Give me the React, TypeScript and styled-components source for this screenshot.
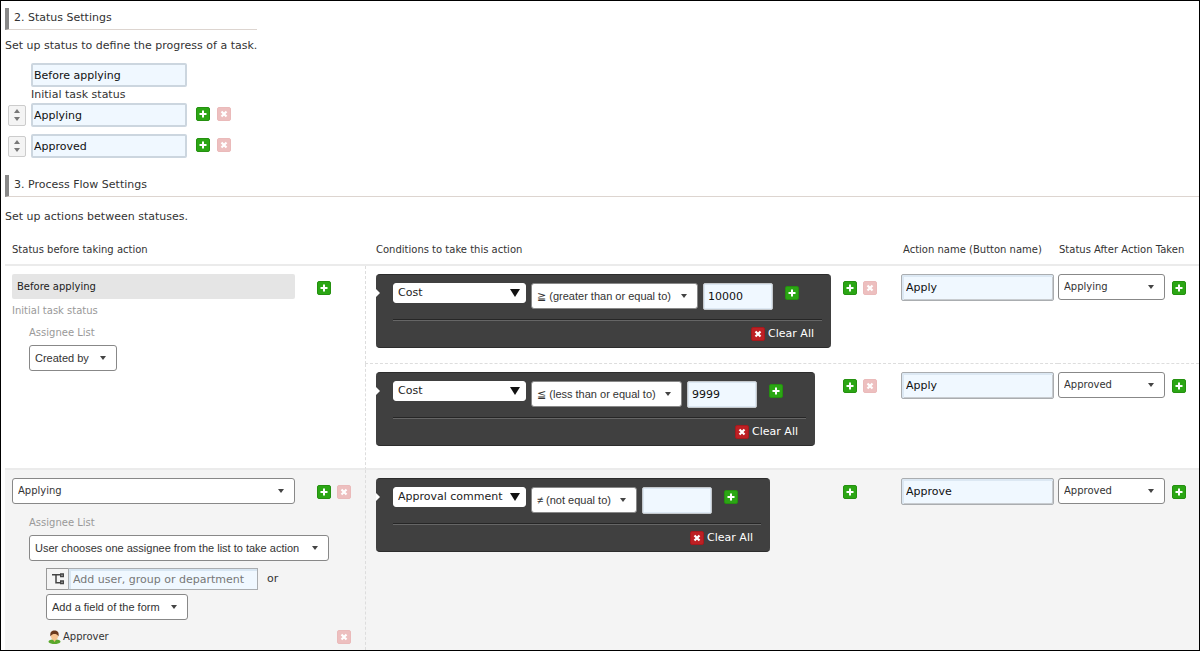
import React from "react";
import styled, { createGlobalStyle, css } from "styled-components";

const verdana = `Verdana, "DejaVu Sans", sans-serif`;
const arial = `Arial, "Liberation Sans", "DejaVu Sans", sans-serif`;

const GlobalStyle = createGlobalStyle`
  *, *::before, *::after { box-sizing: border-box; }
  body { margin: 0; background: #fff; color: #333; font: 11px/16px ${verdana}; }
  h2, p { margin: 0; font-weight: 400; }
  button, input, select { font: inherit; color: inherit; margin: 0; }
`;

const Page = styled.main`
  min-height: 100vh;
  padding: 7px 0 0 4px;
  border: 1px solid #000;
`;

const StatusSection = styled.section`
  width: fit-content;
  margin-bottom: 17px;
`;

const SectionTitle = styled.h2`
  padding: 2px 0 3px 5px;
  border-left: 4px solid #888;
  border-bottom: 1px solid #ddd5d0;
  font-size: 11px;
  line-height: 16px;
`;

const Lead = styled.p<{ $top: number }>`
  padding: ${(p) => p.$top}px 0 9px;
`;

const StatusList = styled.ul`
  margin: 0;
  padding: 0 0 0 3px;
  list-style: none;
`;

const StatusItem = styled.li`
  display: flex;
  gap: 5px;
  align-items: center;
  margin-bottom: 7px;
`;

const InitialItem = styled.li`
  width: 156px;
  margin-left: 23px;
`;

const InitialNote = styled.div`
  line-height: 16px;
`;

const TextInput = styled.input<{ $w: number; $h: number }>`
  flex: none;
  width: ${(p) => p.$w}px;
  height: ${(p) => p.$h}px;
  padding: 0 4px;
  border: 1px solid #c4c8cc;
  border-radius: 2px;
  outline: 0;
  background: #f0f8ff;
  box-shadow: inset 0 0 0 1px #dbe7f2;
  color: #111;
`;

const StatusInput = styled(TextInput)`
  padding: 0 1px;
  border: 2px solid #ccd6df;
  box-shadow: none;
`;

const ActionInput = styled(TextInput)`
  border-color: #aaadb0;
  box-shadow: inset 1px 1px 0 1px #dce8f3, inset -1px -1px 0 0 #c8ccd0;
`;

const SortHandle = styled.button`
  display: flex;
  flex: none;
  flex-direction: column;
  align-items: center;
  justify-content: center;
  gap: 4px;
  width: 18px;
  height: 21px;
  padding: 0;
  border: 1px solid #ccc;
  border-radius: 2px;
  background: #f4f4f4;
`;

const Triangle = styled.span<{ $up?: boolean; $size: number }>`
  border: ${(p) => p.$size}px solid transparent;
  ${(p) =>
    p.$up
      ? css`border-top: 0; border-bottom: ${p.$size + 1}px solid #777;`
      : css`border-bottom: 0; border-top: ${p.$size + 1}px solid #777;`}
`;

const IconButton = styled.button`
  display: block;
  flex: none;
  width: 14px;
  height: 14px;
  padding: 0;
  border: 0;
  background: none;
  svg { display: block; }
`;

function AddIcon() {
  return (
    <svg width="14" height="14" viewBox="0 0 14 14" aria-hidden="true">
      <rect x="0.5" y="0.5" width="13" height="13" rx="1.5" fill="#2ba614" stroke="#259010" />
      <path d="M7 3.5v7M3.5 7h7" stroke="#fff" strokeWidth="2" />
    </svg>
  );
}

function RemoveIcon({ faded }: { faded?: boolean }) {
  return (
    <svg width="14" height="14" viewBox="0 0 14 14" aria-hidden="true">
      <rect x="0.5" y="0.5" width="13" height="13" rx="1.5" fill={faded ? "#edbfbf" : "#bd2024"} stroke={faded ? "#eababa" : "#a5191d"} />
      <path d="M4.5 4.5l5 5M9.5 4.5l-5 5" stroke="#fff" strokeWidth="2.2" />
    </svg>
  );
}

const AddButton = ({ label }: { label: string }) => (
  <IconButton type="button" aria-label={label}><AddIcon /></IconButton>
);
const RemoveButton = ({ label }: { label: string }) => (
  <IconButton type="button" aria-label={label}><RemoveIcon faded /></IconButton>
);

const Tools = styled.div<{ $w?: number }>`
  display: flex;
  flex: none;
  gap: 6px;
  width: ${(p) => (p.$w ? `${p.$w}px` : "auto")};
  padding-top: 7px;
`;

const ListTools = styled(Tools)`
  gap: 7px;
  padding: 0 0 2px 4px;
`;

const SelectBox = styled.span<{ $w: number }>`
  display: inline-grid;
  align-items: center;
  flex: none;
  width: ${(p) => p.$w}px;
  > * { grid-area: 1 / 1; }
  > span { justify-self: end; margin-right: 11px; pointer-events: none; border-top-color: #444; }
`;

const SelectControl = styled.select`
  appearance: none;
  width: 100%;
  height: 26px;
  padding: 0 20px 0 5px;
  border: 1px solid #888;
  border-radius: 3px;
  background: #fff;
  color: #333;
  font-family: ${arial};
  font-size: 11px;
`;

const StatusControl = styled(SelectControl)`
  font-family: ${verdana};
  font-size: 10px;
`;

const FieldBox = styled(SelectBox)`
  > span { margin-right: 6px; border-top-width: 8px; border-top-color: #111; }
`;

const FieldControl = styled(SelectControl)`
  height: 20px;
  padding-left: 4px;
  border-color: #fff;
  color: #222;
  font-family: ${verdana};
`;

function Select({ w, label, value }: { w: number; label: string; value: string }) {
  return (
    <SelectBox $w={w}>
      <SelectControl aria-label={label} defaultValue={value}><option>{value}</option></SelectControl>
      <Triangle $size={3} />
    </SelectBox>
  );
}

function StatusSelect({ w, label, value }: { w: number; label: string; value: string }) {
  return (
    <SelectBox $w={w}>
      <StatusControl aria-label={label} defaultValue={value}><option>{value}</option></StatusControl>
      <Triangle $size={3} />
    </SelectBox>
  );
}

const FlowTable = styled.table`
  width: 100%;
  table-layout: fixed;
  border-collapse: separate;
  border-spacing: 0;
`;

const Column = styled.col<{ $w?: number }>`
  width: ${(p) => (p.$w ? `${p.$w}px` : "auto")};
`;

const HeadCell = styled.th<{ $indent: number }>`
  height: 32px;
  padding: 2px 0 0 ${(p) => p.$indent}px;
  border-bottom: 2px solid #ebebeb;
  font-size: 10px;
  font-weight: 400;
  text-align: left;
  white-space: nowrap;
`;

const FlowRow = styled.tr<{ $shaded?: boolean; $h: number }>`
  height: ${(p) => p.$h}px;
  background: ${(p) => (p.$shaded ? "#f4f4f4" : "#fff")};
`;

const Cell = styled.td<{ $line?: "dashed" | "solid" }>`
  padding: 8px 0 0;
  vertical-align: top;
  ${(p) => p.$line && css`border-bottom: ${p.$line === "solid" ? "2px solid #ebebeb" : "1px dashed #ddd"};`}
`;

const StatusCell = styled(Cell)`
  padding-left: 7px;
`;

const ConditionCell = styled(Cell)`
  padding: 8px 24px 0 10px;
  border-left: 1px dashed #ddd;
`;

const Line = styled.div<{ $gap: number }>`
  display: flex;
  align-items: flex-start;
  gap: ${(p) => p.$gap}px;
`;

const SpreadLine = styled.div`
  display: flex;
  justify-content: space-between;
  align-items: flex-start;
`;

const FixedStatus = styled.div`
  width: 283px;
  height: 25px;
  padding: 0 5px;
  border-radius: 2px;
  background: #e5e5e5;
  color: #222;
  font-size: 10px;
  line-height: 25px;
`;

const Muted = styled.div`
  padding-top: 4px;
  color: #999;
  font-size: 10px;
  line-height: 16px;
`;

const Assignee = styled.div<{ $top: number }>`
  padding: ${(p) => p.$top}px 0 0 17px;
`;

const AssigneeTitle = styled.div`
  padding-bottom: 4px;
  color: #999;
  font-size: 10px;
  line-height: 16px;
`;

const Members = styled.div`
  display: flex;
  flex-direction: column;
  gap: 4px;
  padding: 7px 0 0 17px;
`;

const PickerLine = styled.div`
  display: flex;
  align-items: center;
  gap: 9px;
`;

const Picker = styled.div`
  display: flex;
`;

const PickerButton = styled.button`
  display: flex;
  align-items: center;
  justify-content: center;
  flex: none;
  width: 22px;
  height: 22px;
  padding: 0;
  border: 1px solid #999;
  border-right: 0;
  background: #f4f4f4;
`;

const PickerInput = styled(ActionInput)`
  border-radius: 0;
  box-shadow: inset 1px 1px 0 1px #d8e6f2;
  &::placeholder { color: #777; opacity: 1; }
`;

const MemberLine = styled.div`
  display: flex;
  align-items: center;
  gap: 2px;
  width: 305px;
  padding: 5px 0 3px 2px;
  font-size: 10px;
  button { margin-left: auto; }
`;

const ConditionBox = styled.div`
  position: relative;
  width: fit-content;
  padding: 8px 9px 0 17px;
  border: 0 solid #2c2c2c;
  border-width: 1px 0;
  border-radius: 4px;
  background: #404040;
  &::before {
    content: "";
    position: absolute;
    left: 0;
    top: 14px;
    border: 4px solid transparent;
    border-right: 0;
    border-left-color: #fff;
  }
`;

const ConditionLine = styled.div`
  display: flex;
  align-items: flex-start;
  gap: 5px;
  padding: 0 23px 9px 0;
  > button { margin: 3px 0 0 7px; }
`;

const ConditionFooter = styled.div`
  display: flex;
  justify-content: flex-end;
  padding: 7px 8px 6px 0;
  border-top: 1px solid #262626;
  box-shadow: inset 0 1px 0 #666;
`;

const ClearButton = styled.button`
  display: flex;
  align-items: center;
  gap: 3px;
  padding: 0;
  border: 0;
  background: none;
  color: #fff;
  line-height: 14px;
`;

type Condition = { field: string; operator: string; width: number; value: string };

function ConditionPanel({ field, operator, width, value }: Condition) {
  return (
    <ConditionBox>
      <ConditionLine>
        <FieldBox $w={133}>
          <FieldControl aria-label="Field" defaultValue={field}><option>{field}</option></FieldControl>
          <Triangle $size={5} />
        </FieldBox>
        <Select w={width} label="Operator" value={operator} />
        <TextInput $w={70} $h={27} aria-label="Value" defaultValue={value} />
        <AddButton label="Add condition" />
      </ConditionLine>
      <ConditionFooter>
        <ClearButton type="button"><RemoveIcon />Clear All</ClearButton>
      </ConditionFooter>
    </ConditionBox>
  );
}

type Action = { condition: Condition; name: string; next: string; removable?: boolean; line?: "dashed" | "solid" };

function ActionCells({ condition, name, next, removable, line }: Action) {
  return (
    <>
      <ConditionCell $line={line}>
        <SpreadLine>
          <ConditionPanel {...condition} />
          <Tools $w={34}>
            <AddButton label="Add action" />
            {removable && <RemoveButton label="Remove action" />}
          </Tools>
        </SpreadLine>
      </ConditionCell>
      <Cell $line={line}><ActionInput $w={153} $h={27} aria-label="Action name" defaultValue={name} /></Cell>
      <Cell $line={line}>
        <Line $gap={7}>
          <StatusSelect w={107} label="Status after action" value={next} />
          <Tools><AddButton label="Add next status" /></Tools>
        </Line>
      </Cell>
    </>
  );
}

function TreeIcon() {
  return (
    <svg width="14" height="14" viewBox="0 0 14 14" fill="none" stroke="#444" strokeWidth="1.5" aria-hidden="true">
      <path d="M1 2.750h8.500M5 2.750v8h4.500" />
      <rect x="9.750" y="2" width="2.500" height="2.500" />
      <rect x="9.750" y="9" width="2.500" height="2.500" />
    </svg>
  );
}

function PersonIcon() {
  return (
    <svg width="13" height="14" viewBox="0 0 13 14" aria-hidden="true">
      <path d="M0.500 12c0-2 2.500-2.500 6-2.500s6 0.500 6 2.500c-1 1.500-3.500 2-6 2s-5-0.500-6-2z" fill="#5aa82c" />
      <path d="M4.500 9h4l-2 3z" fill="#f2b883" />
      <ellipse cx="6.500" cy="6" rx="3.500" ry="4" fill="#f7c592" />
      <path d="M2.500 6.500C1.500 2 4 0.500 6.500 0.500S11.500 2 10.500 6.500C9.500 4.500 8 4 6.500 4S3.500 4.500 2.500 6.500z" fill="#6b3a1e" />
    </svg>
  );
}

export default function App() {
  return (
    <>
      <GlobalStyle />
      <Page>
        <StatusSection>
          <SectionTitle>2. Status Settings</SectionTitle>
          <Lead $top={8}>Set up status to define the progress of a task.</Lead>
          <StatusList>
            <InitialItem>
              <StatusInput $w={156} $h={24} aria-label="Initial status" defaultValue="Before applying" />
              <InitialNote>Initial task status</InitialNote>
            </InitialItem>
            {["Applying", "Approved"].map((name) => (
              <StatusItem key={name}>
                <SortHandle type="button" aria-label={`Reorder ${name}`}>
                  <Triangle $up $size={3} />
                  <Triangle $size={3} />
                </SortHandle>
                <StatusInput $w={156} $h={24} aria-label="Status" defaultValue={name} />
                <ListTools>
                  <AddButton label="Add status" />
                  <RemoveButton label="Remove status" />
                </ListTools>
              </StatusItem>
            ))}
          </StatusList>
        </StatusSection>
        <section>
          <SectionTitle>3. Process Flow Settings</SectionTitle>
          <Lead $top={12}>Set up actions between statuses.</Lead>
          <FlowTable>
            <colgroup>
              <Column $w={360} />
              <Column />
              <Column $w={157} />
              <Column $w={141} />
            </colgroup>
            <thead>
              <tr>
                <HeadCell $indent={7}>Status before taking action</HeadCell>
                <HeadCell $indent={11}>Conditions to take this action</HeadCell>
                <HeadCell $indent={2}>Action name (Button name)</HeadCell>
                <HeadCell $indent={1}>Status After Action Taken</HeadCell>
              </tr>
            </thead>
            <tbody>
              <FlowRow $h={98}>
                <StatusCell rowSpan={2} $line="solid">
                  <Line $gap={22}>
                    <FixedStatus>Before applying</FixedStatus>
                    <Tools><AddButton label="Add status" /></Tools>
                  </Line>
                  <Muted>Initial task status</Muted>
                  <Assignee $top={6}>
                    <AssigneeTitle>Assignee List</AssigneeTitle>
                    <Select w={88} label="Assignee List" value="Created by" />
                  </Assignee>
                </StatusCell>
                <ActionCells
                  condition={{ field: "Cost", operator: "≧ (greater than or equal to)", width: 167, value: "10000" }}
                  name="Apply" next="Applying" removable line="dashed"
                />
              </FlowRow>
              <FlowRow $h={106}>
                <ActionCells
                  condition={{ field: "Cost", operator: "≦ (less than or equal to)", width: 151, value: "9999" }}
                  name="Apply" next="Approved" removable line="solid"
                />
              </FlowRow>
              <FlowRow $h={180} $shaded>
                <StatusCell>
                  <Line $gap={22}>
                    <StatusSelect w={283} label="Status before action" value="Applying" />
                    <Tools>
                      <AddButton label="Add status" />
                      <RemoveButton label="Remove status" />
                    </Tools>
                  </Line>
                  <Assignee $top={11}>
                    <AssigneeTitle>Assignee List</AssigneeTitle>
                    <Select w={300} label="Assignee List" value="User chooses one assignee from the list to take action" />
                    <Members>
                      <PickerLine>
                        <Picker>
                          <PickerButton type="button" aria-label="Browse the organization"><TreeIcon /></PickerButton>
                          <PickerInput $w={190} $h={22} aria-label="Assignee" placeholder="Add user, group or department" />
                        </Picker>
                        <span>or</span>
                      </PickerLine>
                      <Select w={142} label="Form field" value="Add a field of the form" />
                      <MemberLine>
                        <PersonIcon />
                        <span>Approver</span>
                        <RemoveButton label="Remove Approver" />
                      </MemberLine>
                    </Members>
                  </Assignee>
                </StatusCell>
                <ActionCells
                  condition={{ field: "Approval comment", operator: "≠ (not equal to)", width: 106, value: "" }}
                  name="Approve" next="Approved"
                />
              </FlowRow>
            </tbody>
          </FlowTable>
        </section>
      </Page>
    </>
  );
}
